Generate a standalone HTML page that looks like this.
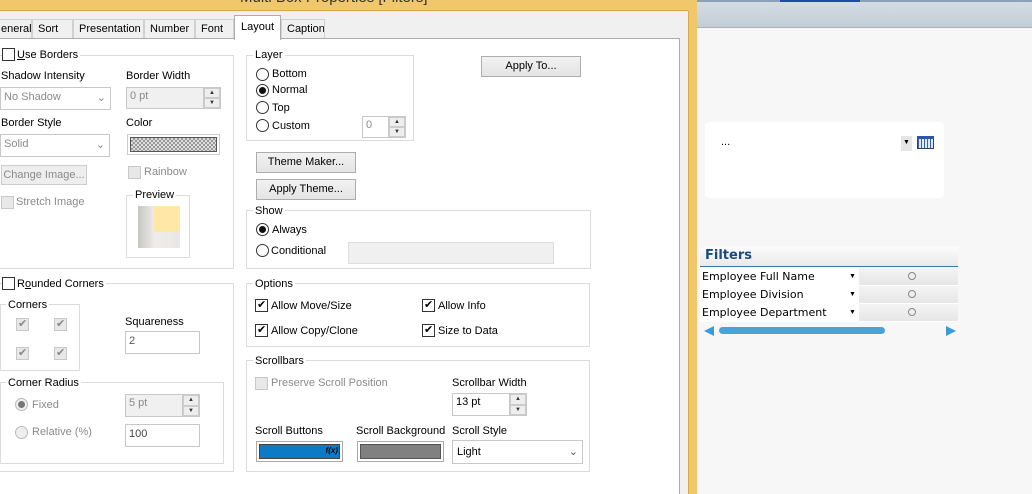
<!DOCTYPE html>
<html style="overflow:hidden"><head><style>
*{box-sizing:border-box;margin:0;padding:0}
html,body{width:1032px;height:494px;overflow:hidden}
body{position:relative;background:#f0f0f0;font-family:"Liberation Sans",sans-serif;font-size:11px;color:#000}
.a{position:absolute}
.t{position:absolute;white-space:nowrap;line-height:14px}
.g{position:absolute;border:1px solid #dcdcdc}
.gl{position:absolute;background:#fff;padding:0 2px;line-height:14px;white-space:nowrap}
.cb{position:absolute;width:13px;height:13px;border:1px solid #333;background:#fff}
.cbd{position:absolute;width:13px;height:13px;border:1px solid #c8c8c8;background:#e8e8e8}
.rd{position:absolute;width:13px;height:13px;border:1px solid #333;border-radius:50%;background:#fff}
.rd.on::after{content:"";position:absolute;left:2px;top:2px;width:7px;height:7px;border-radius:50%;background:#111}
.rd.dd::after{background:#777}
.btn{position:absolute;border:1px solid #adadad;background:linear-gradient(#f2f2f2,#e4e4e4);text-align:center;line-height:18px;white-space:nowrap}
.inp{position:absolute;border:1px solid #c8c8c8;background:#fff;padding-left:3px;line-height:18px;white-space:nowrap}
.dis{color:#8a8a8a}
.spin{position:absolute;right:0;top:0;width:17px;height:100%;border-left:1px solid #c8c8c8}
.spin i{display:block;height:50%;border:1px solid #ccc;background:#eee;font-size:6px;line-height:8px;text-align:center;font-style:normal;color:#333}
.chk::after{content:"✔";position:absolute;left:1px;top:-2px;font-size:11px}
.chkd::after{content:"✔";position:absolute;left:1px;top:-2px;font-size:11px;color:#888}
.tab{position:absolute;top:19px;height:19px;border:1px solid #d0d0d0;border-bottom:none;background:#f0f0f0;line-height:18px;padding-left:5px;white-space:nowrap;overflow:hidden}
</style></head><body>
<div class="a" style="left:0;top:0;width:697px;height:11px;background:#f0c76b;border-bottom:1px solid #d8a84a"></div>
<div class="t" style="left:240px;top:-9px;font-size:15px;color:#333">Multi Box Properties [Filters]</div>
<div class="a" style="left:688px;top:0;width:9px;height:494px;background:#f0c76b"></div>
<div class="a" style="left:688px;top:11px;width:1px;height:483px;background:#d8a84a"></div>
<!-- tabs -->
<div class="tab" style="left:-5px;width:37px">eneral</div>
<div class="tab" style="left:32px;width:41px">Sort</div>
<div class="tab" style="left:73px;width:71px">Presentation</div>
<div class="tab" style="left:144px;width:51px">Number</div>
<div class="tab" style="left:195px;width:39px">Font</div>
<div class="tab" style="left:281px;width:44px">Caption</div>
<div class="a" style="left:-2px;top:38px;width:682px;height:456px;background:#fff;border:1px solid #adadad;border-bottom:none"></div>
<div class="a" style="left:234px;top:15px;width:47px;height:25px;background:#fff;border:1px solid #adadad;border-bottom:none;text-align:center;line-height:22px">Layout</div>

<!-- Use Borders -->
<div class="g" style="left:-2px;top:55px;width:236px;height:214px"></div>
<div class="cb" style="left:2px;top:48px"></div>
<div class="gl" style="left:15px;top:48px"><u>U</u>se Borders</div>
<div class="t" style="left:1px;top:69px">Shadow Intensity</div>
<div class="inp dis" style="left:0;top:87px;width:111px;height:23px">No Shadow<span class="a" style="right:4px;top:1px">⌄</span></div>
<div class="t" style="left:126px;top:69px">Border Width</div>
<div class="inp dis" style="left:126px;top:87px;width:95px;height:22px;background:#f0f0f0;line-height:16px">0 pt<div class="spin"><i>▲</i><i>▼</i></div></div>
<div class="t" style="left:1px;top:116px">Border Style</div>
<div class="inp dis" style="left:0;top:134px;width:110px;height:23px">Solid<span class="a" style="right:4px;top:1px">⌄</span></div>
<div class="t" style="left:126px;top:116px">Color</div>
<div class="a" style="left:127px;top:134px;width:93px;height:21px;border:1px solid #ccc;padding:2px"><div style="width:100%;height:100%;border:1px solid #555;background:repeating-conic-gradient(#999 0 25%,#ddd 0 50%) 0 0/4px 4px"></div></div>
<div class="btn dis" style="left:1px;top:165px;width:86px;height:20px;background:#eee;border-color:#ccc">Change Image...</div>
<div class="cbd" style="left:128px;top:166px"></div>
<div class="t dis" style="left:144px;top:165px">Rainbow</div>
<div class="cbd" style="left:1px;top:196px"></div>
<div class="t dis" style="left:16px;top:195px">Stretch Image</div>
<div class="g" style="left:126px;top:195px;width:64px;height:63px"></div>
<div class="gl" style="left:133px;top:188px">Preview</div>
<div class="a" style="left:138px;top:206px;width:42px;height:42px;background:linear-gradient(90deg,#c8c6c2,#eeedeb 40%,#e9e8e6)"></div>
<div class="a" style="left:154px;top:206px;width:26px;height:26px;background:#ffe7a8"></div>

<!-- Rounded corners -->
<div class="g" style="left:-2px;top:283px;width:236px;height:189px"></div>
<div class="cb" style="left:2px;top:277px"></div>
<div class="gl" style="left:15px;top:277px">R<u>o</u>unded Corners</div>
<div class="g" style="left:0;top:304px;width:80px;height:67px"></div>
<div class="gl" style="left:6px;top:298px">Corners</div>
<div class="cbd chkd" style="left:16px;top:318px"></div>
<div class="cbd chkd" style="left:54px;top:318px"></div>
<div class="cbd chkd" style="left:16px;top:347px"></div>
<div class="cbd chkd" style="left:54px;top:347px"></div>
<div class="t" style="left:125px;top:315px">Squareness</div>
<div class="inp dis" style="left:125px;top:331px;width:75px;height:23px;color:#555">2</div>
<div class="g" style="left:0;top:382px;width:224px;height:82px"></div>
<div class="gl" style="left:6px;top:376px">Corner Radius</div>
<div class="rd on dd" style="left:15px;top:398px;border-color:#bbb;background:#eee"></div>
<div class="t dis" style="left:32px;top:398px">Fixed</div>
<div class="inp dis" style="left:125px;top:394px;width:75px;height:23px;background:#f0f0f0;line-height:16px">5 pt<div class="spin"><i>▲</i><i>▼</i></div></div>
<div class="rd" style="left:15px;top:426px;border-color:#bbb;background:#eee"></div>
<div class="t dis" style="left:32px;top:425px">Relative (%)</div>
<div class="inp" style="left:125px;top:424px;width:75px;height:23px;color:#444">100</div>

<!-- Layer -->
<div class="g" style="left:246px;top:55px;width:168px;height:86px"></div>
<div class="gl" style="left:253px;top:48px">Layer</div>
<div class="rd" style="left:256px;top:68px"></div><div class="t" style="left:272px;top:67px">Bottom</div>
<div class="rd on" style="left:256px;top:84px"></div><div class="t" style="left:272px;top:83px">Normal</div>
<div class="rd" style="left:256px;top:101px"></div><div class="t" style="left:272px;top:101px">Top</div>
<div class="rd" style="left:256px;top:119px"></div><div class="t" style="left:272px;top:119px">Custom</div>
<div class="inp dis" style="left:362px;top:116px;width:44px;height:22px;line-height:16px">0<div class="spin"><i>▲</i><i>▼</i></div></div>
<div class="btn" style="left:481px;top:56px;width:100px;height:21px">Apply To...</div>
<div class="btn" style="left:256px;top:152px;width:100px;height:21px">Theme Maker...</div>
<div class="btn" style="left:256px;top:179px;width:100px;height:21px">Apply Theme...</div>

<!-- Show -->
<div class="g" style="left:246px;top:210px;width:345px;height:59px"></div>
<div class="gl" style="left:253px;top:204px">Show</div>
<div class="rd on" style="left:256px;top:223px"></div><div class="t" style="left:272px;top:223px">Always</div>
<div class="rd" style="left:256px;top:244px"></div><div class="t" style="left:271px;top:244px">Conditional</div>
<div class="a" style="left:348px;top:242px;width:206px;height:22px;background:#f0f0f0;border:1px solid #ddd"></div>

<!-- Options -->
<div class="g" style="left:246px;top:283px;width:344px;height:64px"></div>
<div class="gl" style="left:253px;top:277px">Options</div>
<div class="cb chk" style="left:255px;top:299px"></div><div class="t" style="left:271px;top:299px">Allow Move/Size</div>
<div class="cb chk" style="left:422px;top:299px"></div><div class="t" style="left:438px;top:299px">Allow Info</div>
<div class="cb chk" style="left:255px;top:324px"></div><div class="t" style="left:271px;top:324px">Allow Copy/Clone</div>
<div class="cb chk" style="left:422px;top:324px"></div><div class="t" style="left:438px;top:324px">Size to Data</div>

<!-- Scrollbars -->
<div class="g" style="left:246px;top:360px;width:344px;height:112px"></div>
<div class="gl" style="left:253px;top:354px">Scrollbars</div>
<div class="cbd" style="left:255px;top:377px"></div><div class="t dis" style="left:271px;top:376px">Preserve Scroll Position</div>
<div class="t" style="left:452px;top:376px">Scrollbar Width</div>
<div class="inp" style="left:452px;top:393px;width:75px;height:23px;line-height:16px">13 pt<div class="spin"><i>▲</i><i>▼</i></div></div>
<div class="t" style="left:255px;top:424px">Scroll Buttons</div>
<div class="t" style="left:356px;top:424px">Scroll Background</div>
<div class="t" style="left:452px;top:424px">Scroll Style</div>
<div class="a" style="left:256px;top:441px;width:87px;height:21px;border:1px solid #aaa;padding:2px"><div style="width:100%;height:100%;border:1px solid #444;background:#0a7bc4;position:relative"><span style="position:absolute;right:1px;top:1px;font-size:8px;font-style:italic;font-weight:bold">f(x)</span></div></div>
<div class="a" style="left:357px;top:441px;width:87px;height:21px;border:1px solid #aaa;padding:2px"><div style="width:100%;height:100%;border:1px solid #555;background:#808080"></div></div>
<div class="inp" style="left:452px;top:440px;width:131px;height:24px;padding-left:4px;line-height:22px">Light<span class="a" style="right:4px;top:0;color:#555">⌄</span></div>

<!-- right pane -->
<div class="a" style="left:697px;top:0;width:335px;height:494px;background:#f7f7f7"></div>
<div class="a" style="left:697px;top:0;width:335px;height:28px;background:linear-gradient(#d6dee5,#c3cdd5);border-bottom:1px solid #a9b2ba"></div>
<div class="a" style="left:697px;top:0;width:335px;height:2px;background:#8ea0b8"></div>
<div class="a" style="left:780px;top:0;width:80px;height:2px;background:#1f4aa8"></div>
<div class="a" style="left:705px;top:122px;width:239px;height:76px;background:#fff;border-radius:4px"></div>
<div class="t" style="left:721px;top:135px">...</div>
<div class="a" style="left:901px;top:136px;width:11px;height:15px;background:#e6e6e6;font-size:7px;text-align:center;line-height:14px">▼</div>
<div class="a" style="left:917px;top:136px;width:17px;height:13px;border:1px solid #345;background:repeating-linear-gradient(90deg,#3a64b0 0 1px,#dfe8f5 1px 3px),#dfe8f5"></div>
<div class="a" style="left:917px;top:136px;width:17px;height:3px;background:#2d56a8"></div>
<div class="a" style="left:700px;top:247px;width:258px;height:20px;background:linear-gradient(#fbfbfb,#eaeaea);border-bottom:1px solid #2e7ab8"></div>
<div class="t" style="left:705px;top:249px;font-weight:bold;font-size:13px;color:#1a4a82;font-family:'DejaVu Sans',sans-serif">Filters</div>
<div class="a" style="left:700px;top:268px;width:258px;height:54px;background:#fff"></div>
<div class="a" style="left:859px;top:268px;width:99px;height:54px;background:repeating-linear-gradient(#f4f4f4 0,#e6e6e6 17px,#fff 17px,#fff 18px)"></div>
<div class="t" style="left:702px;top:270px;font-family:'DejaVu Sans',sans-serif;font-size:11px">Employee Full Name</div>
<div class="t" style="left:702px;top:288px;font-family:'DejaVu Sans',sans-serif;font-size:11px">Employee Division</div>
<div class="t" style="left:702px;top:306px;font-family:'DejaVu Sans',sans-serif;font-size:11px">Employee Department</div>
<div class="t" style="left:849px;top:270px;font-size:7px">▼</div>
<div class="t" style="left:849px;top:288px;font-size:7px">▼</div>
<div class="t" style="left:849px;top:306px;font-size:7px">▼</div>
<div class="a" style="left:908px;top:272px;width:8px;height:8px;border-radius:50%;border:1px solid #888;background:#eee"></div>
<div class="a" style="left:908px;top:290px;width:8px;height:8px;border-radius:50%;border:1px solid #888;background:#eee"></div>
<div class="a" style="left:908px;top:308px;width:8px;height:8px;border-radius:50%;border:1px solid #888;background:#eee"></div>
<div class="a" style="left:704px;top:326px;width:0;height:0;border-top:5px solid transparent;border-bottom:5px solid transparent;border-right:10px solid #3d9ad6"></div>
<div class="a" style="left:719px;top:327px;width:166px;height:7px;border-radius:4px;background:#4aa3d6"></div>
<div class="a" style="left:946px;top:326px;width:0;height:0;border-top:5px solid transparent;border-bottom:5px solid transparent;border-left:10px solid #3d9ad6"></div>
</body></html>
